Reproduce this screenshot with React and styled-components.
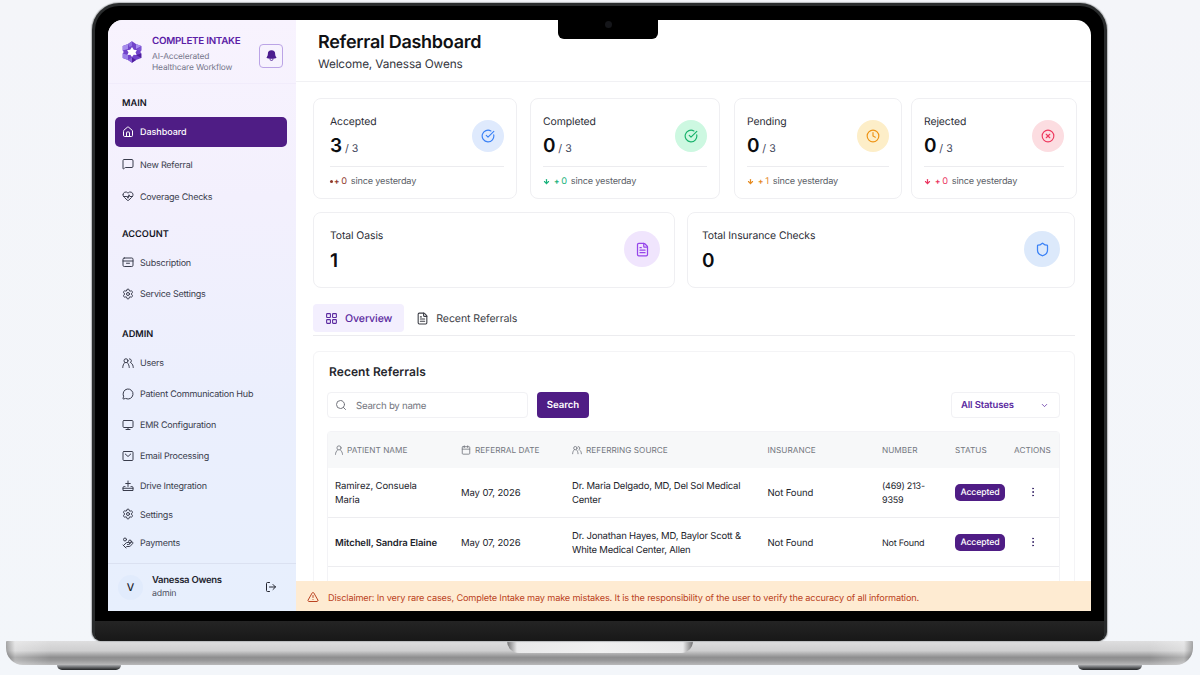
import React from 'react'
import styled, { createGlobalStyle } from 'styled-components'
import {
  House, MessageSquare, HeartPulse, Settings, MessageCircle, Monitor,
  HandCoins, LogOut, CircleCheckBig, Clock, CircleX, FileText, Shield, ArrowDown,
  LayoutGrid, Search, ChevronDown, Calendar, EllipsisVertical, TriangleAlert,
} from 'lucide-react'
import { HiBell } from 'react-icons/hi2'

const Svg = ({ size = 24, strokeWidth = 2, children }) => (
  <svg width={size} height={size} viewBox="0 0 24 24" fill="none" stroke="currentColor" strokeWidth={strokeWidth} strokeLinecap="round" strokeLinejoin="round">
    {children}
  </svg>
)

const CardIcon = (props) => (
  <Svg {...props}>
    <rect x="2" y="4" width="20" height="17" rx="2.5" />
    <path d="M2 10h20M9 14.5h6" />
  </Svg>
)

const MailIcon = (props) => (
  <Svg {...props}>
    <rect x="2" y="3" width="20" height="18" rx="2" />
    <path d="m6.5 8 5.5 5 5.5-5" />
  </Svg>
)

const DriveIcon = (props) => (
  <Svg {...props}>
    <path d="M12 2v11M7.5 7h9" />
    <path d="M6 13H4.5A2.5 2.5 0 0 0 2 15.5V21h20v-5.5a2.5 2.5 0 0 0-2.5-2.5H18" />
    <path d="M2 16.5h20" />
  </Svg>
)

const UsersIcon = (props) => (
  <Svg {...props}>
    <circle cx="8" cy="7.5" r="4" />
    <path d="M1.5 21c0-4 1.5-7 4-9.7M14.5 21c0-4-1.5-7-4-9.7" />
    <path d="M15 3.7a4 4 0 0 1 1.5 7.6M18.5 12c2.500 2 4 5 4 9" />
  </Svg>
)

const PersonIcon = (props) => (
  <Svg {...props}>
    <circle cx="12" cy="7" r="5" />
    <path d="M3.5 22.5c0-4.5 2.500-8 5.500-10.800M20.500 22.500c0-4.500-2.500-8-5.500-10.800" />
  </Svg>
)

const Logo = () => (
  <svg width="20" height="22" viewBox="0 0 20 22">
    <path d="M10 0.3 14 3 19.3 5V9.5L18.300 11 19.300 12.500V17L14 19 10 21.700 6 19 0.700 17V12.500L1.700 11 0.700 9.500V5L6 3Z" fill="#7244ca" />
    <path d="M6 3 0.7 5V9.5L6 8Z" fill="#a68cec" />
    <path d="M10 0.3 6 3 7.5 6 10 5Z" fill="#8f70e0" />
    <path d="M14 3 19.3 5 14 8Z" fill="#a98ff0" />
    <path d="M19.3 5V9.5L14.500 9Z" fill="#7d55d4" />
    <path d="M19.3 12.5V17L14 14Z" fill="#4f1f9d" />
    <path d="M14 19 10 21.7V16.500Z" fill="#4f1f9d" />
    <path d="M10 21.7 6 19 10 16.500Z" fill="#8a66dc" />
    <path d="M0.7 17V12.5L6 14 6 19Z" fill="#9c80e8" />
    <path d="M10 6 11.8 8.800 15 9.300 13.500 11.300 14.600 13.900 11.700 13.700 10 16 8.300 13.700 5.400 13.900 6.500 11.300 5 9.300 8.200 8.800Z" fill="#fff" />
  </svg>
)

const menu = [
  {
    title: 'MAIN', top: 14, bottom: 7,
    items: [
      { label: 'Dashboard', icon: House, height: 30, active: true },
      { label: 'New Referral', icon: MessageSquare, height: 35 },
      { label: 'Coverage Checks', icon: HeartPulse, height: 29 },
    ],
  },
  {
    title: 'ACCOUNT', top: 17.5, bottom: 6.5,
    items: [
      { label: 'Subscription', icon: CardIcon, height: 31 },
      { label: 'Service Settings', icon: Settings, height: 32 },
    ],
  },
  {
    title: 'ADMIN', top: 19, bottom: 6.5,
    items: [
      { label: 'Users', icon: UsersIcon, height: 31 },
      { label: 'Patient Communication Hub', icon: MessageCircle, height: 31 },
      { label: 'EMR Configuration', icon: Monitor, height: 31 },
      { label: 'Email Processing', icon: MailIcon, height: 31 },
      { label: 'Drive Integration', icon: DriveIcon, height: 29 },
      { label: 'Settings', icon: Settings, height: 28 },
      { label: 'Payments', icon: HandCoins, height: 29 },
    ],
  },
]

const stats = [
  { label: 'Accepted', value: 3, dot: true, change: '0', icon: CircleCheckBig, color: '#3b82f6', bg: '#dfeafd', trend: '#8f3a2c' },
  { label: 'Completed', value: 0, change: '0', icon: CircleCheckBig, color: '#18b26b', bg: '#cdf8e1', trend: '#18b27b' },
  { label: 'Pending', value: 0, change: '1', icon: Clock, color: '#ee9416', bg: '#fdeec8', trend: '#e58a1f' },
  { label: 'Rejected', value: 0, change: '0', icon: CircleX, color: '#ee3a5f', bg: '#fcdde1', trend: '#ea3560' },
]

const totals = [
  { label: 'Total Oasis', value: 1, icon: FileText, color: '#9646ea', bg: '#f0e5fd' },
  { label: 'Total Insurance Checks', value: 0, icon: Shield, color: '#3b82f6', bg: '#dce9fb' },
]

const columns = [
  { label: 'PATIENT NAME', icon: PersonIcon },
  { label: 'REFERRAL DATE', icon: Calendar },
  { label: 'REFERRING SOURCE', icon: UsersIcon },
  { label: 'INSURANCE' },
  { label: 'NUMBER' },
  { label: 'STATUS' },
  { label: 'ACTIONS' },
]

const rows = [
  { name: 'Ramirez, Consuela\nMaria', date: 'May 07, 2026', source: 'Dr. Maria Delgado, MD, Del Sol Medical\nCenter', insurance: 'Not Found', number: '(469) 213-\n9359', status: 'Accepted' },
  { name: 'Mitchell, Sandra Elaine', bold: true, date: 'May 07, 2026', source: 'Dr. Jonathan Hayes, MD, Baylor Scott &\nWhite Medical Center, Allen', insurance: 'Not Found', number: 'Not Found', status: 'Accepted' },
]

const App = () => {
  return (
    <Page>
      <GlobalStyle />
      <Lid>
        <Notch><Camera /></Notch>
        <Screen>
          <Sidebar>
            <Brand>
              <Logo />
              <BrandText>
                <BrandName>COMPLETE INTAKE</BrandName>
                <Tagline>AI-Accelerated<br />Healthcare Workflow</Tagline>
              </BrandText>
              <BellButton><HiBell size={13} /></BellButton>
            </Brand>
            {menu.map((section) => (
              <nav key={section.title}>
                <SectionTitle $top={section.top} $bottom={section.bottom}>{section.title}</SectionTitle>
                {section.items.map(({ label, icon: Icon, height, active }) => (
                  <MenuItem key={label} $height={height} $active={active}>
                    <Icon size={12} strokeWidth={2} />
                    {label}
                  </MenuItem>
                ))}
              </nav>
            ))}
            <User>
              <Avatar>V</Avatar>
              <UserText>
                <UserName>Vanessa Owens</UserName>
                <UserRole>admin</UserRole>
              </UserText>
              <LogOut size={12} />
            </User>
          </Sidebar>
          <Main>
            <Header>
              <Title>Referral Dashboard</Title>
              <Welcome>Welcome, Vanessa Owens</Welcome>
            </Header>
            <Content>
              <Stats>
                {stats.map(({ label, value, dot, change, icon: Icon, color, bg, trend }) => (
                  <StatCard key={label}>
                    <StatTop>
                      <div>
                        <StatLabel>{label}</StatLabel>
                        <StatValue>{value} <small>/ 3</small></StatValue>
                      </div>
                      <Circle $size={32} $color={color} $bg={bg}><Icon size={14} strokeWidth={2} /></Circle>
                    </StatTop>
                    <StatFooter>
                      <Trend $color={trend}>
                        {dot ? <Dot /> : <ArrowDown size={7} strokeWidth={4} />}
                        <Plus>+</Plus>{change}
                      </Trend>
                      since yesterday
                    </StatFooter>
                  </StatCard>
                ))}
              </Stats>
              <Totals>
                {totals.map(({ label, value, icon: Icon, color, bg }) => (
                  <TotalCard key={label}>
                    <div>
                      <StatLabel>{label}</StatLabel>
                      <TotalValue>{value}</TotalValue>
                    </div>
                    <Circle $size={36} $color={color} $bg={bg}><Icon size={15} strokeWidth={2} /></Circle>
                  </TotalCard>
                ))}
              </Totals>
              <Tabs>
                <Tab $active><LayoutGrid size={13} />Overview</Tab>
                <Tab><FileText size={13} />Recent Referrals</Tab>
              </Tabs>
              <Panel>
                <PanelTitle>Recent Referrals</PanelTitle>
                <Toolbar>
                  <SearchBox><Search size={12} />Search by name</SearchBox>
                  <SearchButton>Search</SearchButton>
                  <StatusSelect>All Statuses<ChevronDown size={9} /></StatusSelect>
                </Toolbar>
                <Table>
                  <TableHead>
                    {columns.map(({ label, icon: Icon }) => (
                      <HeadCell key={label}>{Icon && <Icon size={10} />}{label}</HeadCell>
                    ))}
                  </TableHead>
                  {rows.map((row) => (
                    <TableRow key={row.name}>
                      <Cell $bold={row.bold}>{row.name}</Cell>
                      <Cell>{row.date}</Cell>
                      <Cell $tight>{row.source}</Cell>
                      <Cell>{row.insurance}</Cell>
                      <Cell $small $tight>{row.number}</Cell>
                      <Status>{row.status}</Status>
                      <Actions><EllipsisVertical size={12} /></Actions>
                    </TableRow>
                  ))}
                </Table>
              </Panel>
            </Content>
            <Disclaimer>
              <TriangleAlert size={12} />
              Disclaimer: In very rare cases, Complete Intake may make mistakes. It is the responsibility of the user to verify the accuracy of all information.
            </Disclaimer>
          </Main>
        </Screen>
        <Chin />
      </Lid>
      <Base><Lip /></Base>
      <Feet><Foot /><Foot /></Feet>
    </Page>
  )
}

export default App

const GlobalStyle = createGlobalStyle`
* {
  box-sizing: border-box;
}
body {
  margin: 0;
  background: #f4f6fa;
  font-family: Inter, 'Liberation Sans', sans-serif;
  text-rendering: geometricPrecision;
  color: #23252f;
}
svg {
  flex-shrink: 0;
}
`

const Page = styled.div`
display: flex;
flex-direction: column;
align-items: center;
width: 1200px;
height: 675px;
padding-top: 3px;
padding-right: 1px;
overflow: hidden;
background: linear-gradient(180deg, #f4f5f9, #f3f6fa);
`

const Lid = styled.div`
position: relative;
width: 1015px;
height: 638px;
padding: 14px 13px 0;
border: 3px solid #2a2c2d;
border-bottom: 0;
border-radius: 27px 27px 9px 9px;
background: #000;
overflow: hidden;
box-shadow: 0 0 1px 1px #b9bbbd;
`

const Notch = styled.div`
position: absolute;
z-index: 2;
top: 10px;
left: 463px;
width: 100px;
height: 23px;
border-radius: 0 0 6px 6px;
background: #000;
`

const Camera = styled.div`
width: 7px;
height: 7px;
margin: 5px auto 0;
border-radius: 50%;
background: #15161a;
`

const Screen = styled.div`
display: flex;
height: 591px;
border-radius: 15px 15px 0 0;
background: #fff;
overflow: hidden;
`

const Chin = styled.div`
height: 20px;
margin: 10px -13px 0;
background: linear-gradient(180deg, #242424, #181818);
`

const Sidebar = styled.aside`
display: flex;
flex-direction: column;
width: 188px;
flex-shrink: 0;
background: linear-gradient(180deg, #f8f3fe 0%, #f3f0fd 30%, #ebeffd 65%, #e7effd 100%);
`

const Brand = styled.div`
display: flex;
align-items: center;
height: 64px;
padding: 0 13px 0 14px;
border-bottom: 1px solid #f1ecfb;
`

const BrandText = styled.div`
flex: 1;
margin-left: 10px;
padding-top: 5px;
white-space: nowrap;
`

const BrandName = styled.div`
font-size: 9.8px;
font-weight: 600;
line-height: 14px;
letter-spacing: -0.25px;
color: #5b21a6;
`

const Tagline = styled.div`
margin-top: 3px;
font-size: 8.4px;
line-height: 11px;
letter-spacing: -0.15px;
color: #74758a;
`

const BellButton = styled.div`
display: flex;
align-items: center;
justify-content: center;
width: 24px;
height: 24px;
margin-top: 8px;
border: 1px solid #bba4e6;
border-radius: 4px;
color: #4c1d8f;
`

const SectionTitle = styled.div`
margin-top: ${(props) => props.$top}px;
margin-bottom: ${(props) => props.$bottom}px;
padding-left: 14px;
font-size: 9.2px;
font-weight: 600;
line-height: 12px;
color: #14161f;
`

const MenuItem = styled.div`
display: flex;
align-items: center;
gap: 6px;
height: ${(props) => props.$height}px;
margin: 0 9px 0 7px;
padding: 1px 0 0 7px;
border-radius: 5px;
font-size: 9px;
font-weight: ${(props) => (props.$active ? 500 : 400)};
letter-spacing: ${(props) => (props.$active ? -0.05 : -0.22)}px;
color: ${(props) => (props.$active ? '#fff' : '#393c4c')};
background: ${(props) => (props.$active ? '#4f1d85' : 'transparent')};
svg {
  margin-bottom: 2px;
}
`

const User = styled.div`
display: flex;
align-items: center;
height: 48px;
margin-top: auto;
padding: 0 19px 0 10px;
border-top: 1px solid #dbe1f1;
color: #23252f;
& > svg {
  margin-bottom: 2px;
}
`

const Avatar = styled.div`
display: flex;
align-items: center;
justify-content: center;
width: 25px;
height: 25px;
border-radius: 50%;
font-size: 10.5px;
font-weight: 500;
background: #e1ebfc;
`

const UserText = styled.div`
flex: 1;
margin-left: 9px;
padding-bottom: 2px;
`

const UserName = styled.div`
font-size: 9.5px;
font-weight: 600;
line-height: 13px;
letter-spacing: -0.27px;
`

const UserRole = styled.div`
font-size: 8.8px;
line-height: 13px;
letter-spacing: -0.2px;
color: #4d5060;
`

const Main = styled.main`
display: flex;
flex-direction: column;
flex: 1;
min-width: 0;
`

const Header = styled.header`
flex-shrink: 0;
height: 62px;
padding: 11px 22px 0;
border-bottom: 1px solid #f1f1f4;
`

const Title = styled.h1`
margin: 0;
font-size: 18px;
font-weight: 600;
line-height: 24px;
letter-spacing: -0.28px;
color: #101114;
`

const Welcome = styled.div`
margin-top: 1px;
font-size: 11.8px;
line-height: 16px;
letter-spacing: -0.13px;
color: #33353d;
`

const Content = styled.div`
flex: 1;
min-height: 0;
padding: 16px 0 0 17px;
overflow: hidden;
`

const Stats = styled.div`
display: grid;
grid-template-columns: 204px 190px 168px 166px;
column-gap: 13px;
`

const StatCard = styled.div`
height: 101px;
padding: 15px 12px 0;
border: 1px solid #efeff2;
border-radius: 8px;
&:first-child {
  padding-left: 16px;
}
&:nth-child(n + 3) {
  margin-left: 1px;
  margin-right: -1px;
}
&:last-child {
  margin-left: -3px;
  margin-right: 3px;
}
`

const StatTop = styled.div`
display: flex;
align-items: center;
justify-content: space-between;
height: 53px;
padding-bottom: 9px;
border-bottom: 1px solid #ececef;
& > div:first-child {
  padding-top: 5px;
}
`

const StatLabel = styled.div`
font-size: 10.4px;
line-height: 14px;
letter-spacing: -0.08px;
color: #2b2d36;
`

const StatValue = styled.div`
margin-top: 4px;
font-size: 19px;
font-weight: 600;
line-height: 26px;
color: #0c0d10;
small {
  margin-left: -2px;
  font-size: 10.6px;
  font-weight: 400;
  color: #42455a;
}
`

const Circle = styled.div`
display: flex;
align-items: center;
justify-content: center;
width: ${(props) => props.$size}px;
height: ${(props) => props.$size}px;
border-radius: 50%;
color: ${(props) => props.$color};
background: ${(props) => props.$bg};
`

const StatFooter = styled.div`
display: flex;
align-items: center;
gap: 4px;
height: 29px;
font-size: 9.2px;
letter-spacing: -0.2px;
color: #5c5f68;
`

const Trend = styled.span`
display: flex;
align-items: center;
color: ${(props) => props.$color};
& > svg {
  margin-right: 4px;
}
`

const Dot = styled.i`
width: 3px;
height: 3px;
margin: 0 1px 1px 0;
border-radius: 50%;
background: currentColor;
`

const Plus = styled.span`
margin: 0 2px 2px 0;
font-size: 8px;
font-weight: 700;
line-height: 8px;
`

const Totals = styled.div`
display: grid;
grid-template-columns: 362px 388px;
column-gap: 12px;
margin-top: 13px;
`

const TotalCard = styled.div`
display: flex;
justify-content: space-between;
height: 76px;
padding: 16px 14px 0 16px;
border: 1px solid #efeff2;
border-radius: 8px;
& + & {
  padding-left: 14px;
}
& > ${Circle} {
  margin-top: 2px;
}
`

const TotalValue = styled.div`
margin-top: 6px;
font-size: 19px;
font-weight: 600;
line-height: 24px;
color: #0c0d10;
`

const Tabs = styled.div`
display: flex;
width: 762px;
height: 32px;
margin-top: 16px;
padding-bottom: 3px;
border-bottom: 1px solid #ececef;
`

const Tab = styled.div`
display: flex;
align-items: center;
gap: 7px;
padding: 0 12px;
border-radius: 4px;
font-size: 10.6px;
letter-spacing: -0.1px;
font-weight: ${(props) => (props.$active ? 500 : 400)};
color: ${(props) => (props.$active ? '#5b2aa0' : '#3c3e46')};
background: ${(props) => (props.$active ? '#f3effe' : 'transparent')};
`

const Panel = styled.section`
width: 762px;
height: 260px;
margin-top: 15px;
padding: 12px 14px 0 13px;
border: 1px solid #f4f4f6;
border-radius: 6px;
`

const PanelTitle = styled.h2`
margin: 0 0 0 2px;
font-size: 12px;
font-weight: 600;
line-height: 16px;
letter-spacing: 0.06px;
color: #26272d;
`

const Toolbar = styled.div`
display: flex;
align-items: center;
height: 26px;
margin-top: 12px;
`

const SearchBox = styled.div`
display: flex;
align-items: center;
gap: 9px;
width: 201px;
height: 26px;
padding: 2px 0 0 7px;
border: 1px solid #f1f1f4;
border-radius: 4px;
font-size: 9.7px;
letter-spacing: -0.28px;
color: #74767e;
svg {
  margin-bottom: 2px;
}
`

const SearchButton = styled.div`
width: 52px;
height: 26px;
margin-left: 9px;
border-radius: 4px;
font-size: 9.7px;
font-weight: 600;
line-height: 27px;
letter-spacing: -0.1px;
text-align: center;
color: #fff;
background: #4f1d85;
`

const StatusSelect = styled.div`
display: flex;
align-items: center;
justify-content: space-between;
width: 109px;
height: 26px;
margin-left: auto;
padding: 1px 10px 0 9px;
border: 1px solid #f1f1f4;
border-radius: 4px;
font-size: 9.5px;
font-weight: 600;
letter-spacing: -0.15px;
color: #5b2aa0;
`

const Table = styled.div`
height: 160px;
margin-top: 13px;
border: 1px solid #f3f3f6;
border-radius: 4px;
`

const TableHead = styled.div`
display: grid;
grid-template-columns: 126px 111px 195.5px 114.5px 73px 59px 1fr;
align-items: center;
height: 36px;
padding-left: 7px;
background: #f7f8f9;
`

const TableRow = styled(TableHead)`
height: 49.5px;
border-bottom: 1px solid #ededf0;
background: none;
& + & {
  padding-top: 1px;
}
`

const HeadCell = styled.div`
display: flex;
align-items: center;
gap: 4px;
font-size: 8.2px;
letter-spacing: 0.05px;
color: #74777f;
&:first-child {
  gap: 3px;
  margin-left: -1px;
}
`

const Cell = styled.div`
padding-top: 3px;
font-size: ${(props) => (props.$small ? 9 : 9.5)}px;
font-weight: ${(props) => (props.$bold ? 600 : 400)};
line-height: 14px;
letter-spacing: ${(props) => (props.$tight ? -0.2 : -0.1)}px;
white-space: pre;
color: #22242c;
`

const Status = styled.div`
width: 50px;
border-radius: 5px;
font-size: 8.8px;
font-weight: 500;
line-height: 17px;
letter-spacing: -0.15px;
text-align: center;
color: #fff;
background: #4f1d85;
`

const Actions = styled.div`
display: flex;
padding-left: 13px;
color: #3c2a6b;
`

const Disclaimer = styled.div`
display: flex;
align-items: center;
gap: 9px;
flex-shrink: 0;
height: 30px;
padding-left: 11px;
padding-top: 4px;
font-size: 9.2px;
letter-spacing: -0.158px;
white-space: nowrap;
color: #bb4322;
background: #feebd2;
svg {
  margin-bottom: 2px;
}
`

const Base = styled.div`
flex-shrink: 0;
width: 1187px;
height: 24px;
border-radius: 1px 1px 17px 17px;
background:
  linear-gradient(90deg, rgba(110, 110, 110, 0.5), rgba(255, 255, 255, 0.3) 9px, rgba(255, 255, 255, 0) 45px, rgba(255, 255, 255, 0) 1143px, rgba(255, 255, 255, 0.3) 1178px, rgba(110, 110, 110, 0.5)),
  linear-gradient(180deg, #dededf 0%, #cfcfd0 40%, #8e8e8f 68%, #979798 80%, #b9b9ba 100%);
`

const Lip = styled.div`
width: 186px;
height: 12px;
margin: 0 auto;
border-radius: 0 0 12px 12px;
background: linear-gradient(90deg, #6f6f70, #e9e9ea 10px, #f0f0f0 50%, #e9e9ea 176px, #6f6f70);
`

const Feet = styled.div`
display: flex;
justify-content: space-between;
width: 1085px;
`

const Foot = styled.div`
width: 64px;
height: 5px;
border-radius: 0 0 5px 5px;
background: linear-gradient(180deg, #a5a7aa, #1f2123);
`
